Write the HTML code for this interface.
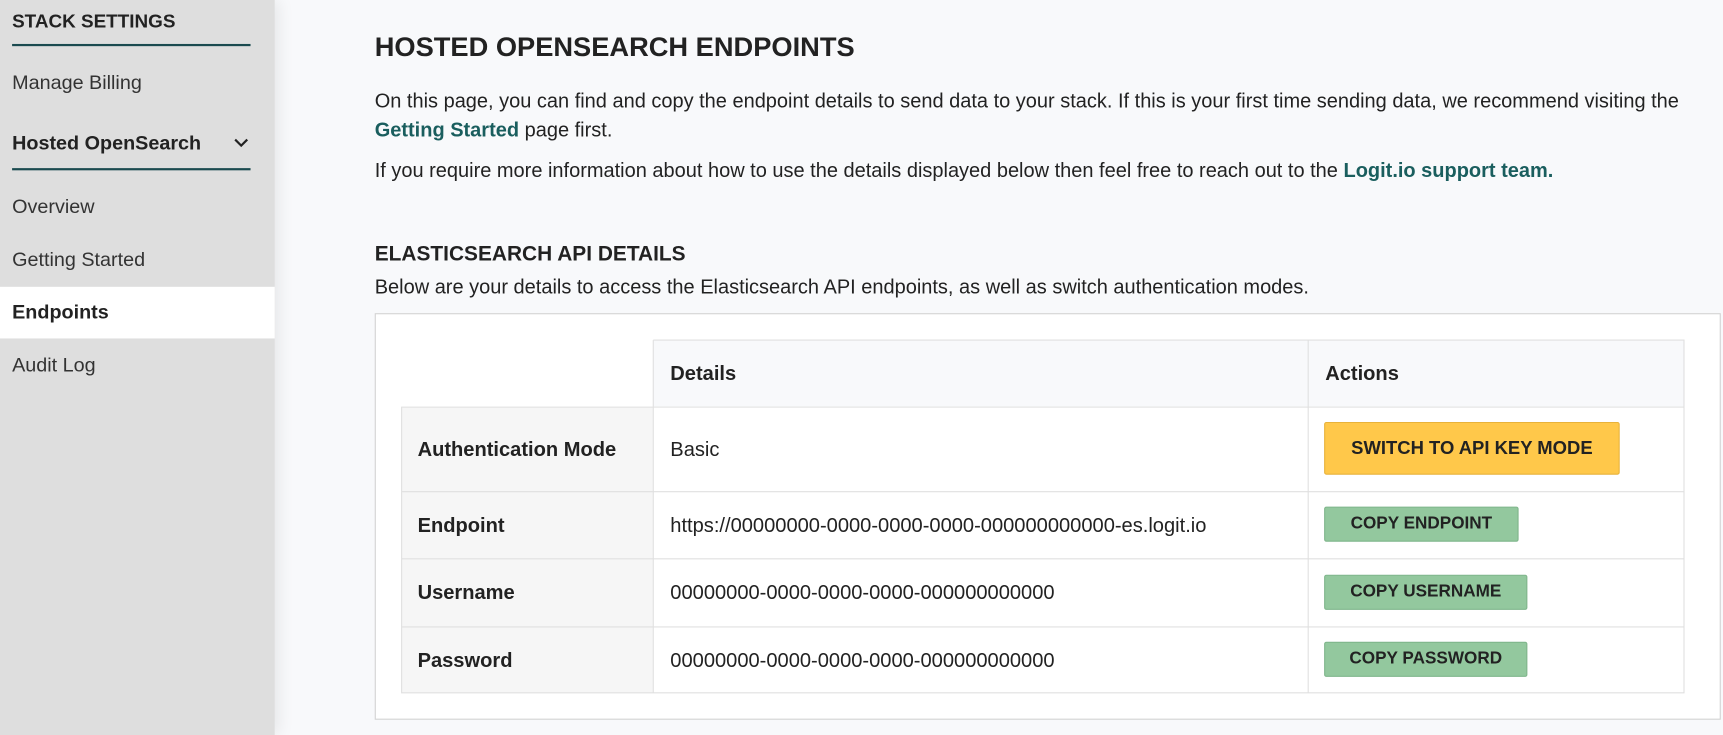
<!DOCTYPE html>
<html><head><style>
*{box-sizing:border-box;margin:0;padding:0}
html,body{width:1723px;height:735px;overflow:hidden;background:#f8f9fb}
#w{position:absolute;left:0;top:0;width:1568px;height:669px;transform:scale(1.09885);transform-origin:0 0;font-family:"Liberation Sans",sans-serif;color:#222}
.side{position:absolute;left:0;top:0;width:250px;height:669px;background:#dedede;box-shadow:4px 0 14px rgba(0,0,0,.08)}
.side div{position:absolute;left:11px;font-size:18px;color:#333;line-height:20px}
.line{position:absolute;left:11px;width:217px;height:2px;background:#1a4a4f}
.a{position:absolute;color:#222}
p{font-size:18.2px;line-height:26px}
a{color:#1a5e5e;font-weight:bold;text-decoration:none}
.card{position:absolute;left:341px;top:285px;width:1225px;height:370px;background:#fff;border:1px solid #d2d2d2}
.c{position:absolute;font-size:18.3px;display:flex;align-items:center}
.b{position:absolute;left:1205px;font-weight:bold;font-size:15.6px;display:flex;align-items:center;justify-content:center;border-radius:2px;color:#222}
</style></head><body><div id="w">
<div class="side">
<div style="top:9px;font-weight:bold;font-size:17.2px;color:#222">STACK SETTINGS</div>
<div class="line" style="top:40px"></div>
<div style="top:65px">Manage Billing</div>
<div style="top:120px;font-weight:bold;color:#222">Hosted OpenSearch</div>
<svg style="position:absolute;left:212px;top:125px" width="15" height="10" viewBox="0 0 15 10"><path d="M2 2l5.5 5.5L13 2" stroke="#222" stroke-width="2" fill="none"/></svg>
<div class="line" style="top:153px"></div>
<div style="top:178px">Overview</div>
<div style="top:226px">Getting Started</div>
<div style="top:261px;left:0;width:250px;height:47px;background:#fff"></div>
<div style="top:274px;font-weight:bold;color:#222">Endpoints</div>
<div style="top:322px">Audit Log</div>
</div>
<div class="a" style="left:341px;top:30px;font-size:24.8px;font-weight:bold">HOSTED OPENSEARCH ENDPOINTS</div>
<div class="a" style="left:341px;top:79px;width:1200px"><p>On this page, you can find and copy the endpoint details to send data to your stack. If this is your first time sending data, we recommend visiting the <a>Getting Started</a> page first.</p></div>
<div class="a" style="left:341px;top:142px"><p>If you require more information about how to use the details displayed below then feel free to reach out to the <a>Logit.io support team.</a></p></div>
<div class="a" style="left:341px;top:221px;font-size:19px;font-weight:bold">ELASTICSEARCH API DETAILS</div>
<div class="a" style="left:341px;top:248px"><p>Below are your details to access the Elasticsearch API endpoints, as well as switch authentication modes.</p></div>
<div class="card"></div>
<svg style="position:absolute;left:0;top:0" width="1568" height="669">
<rect x="594.5" y="309.5" width="938" height="61" fill="#f8f9fb"/>
<rect x="365.5" y="370.5" width="229" height="260" fill="#f6f6f6"/>
<g stroke="#e0e0e0" fill="none">
<path d="M594.5 309.5H1532.5V630.5H365.5V370.5H1532.5M594.5 309.5V630.5M1190.5 309.5V630.5M365.5 447.5H1532.5M365.5 508.5H1532.5M365.5 570.5H1532.5"/>
</g>
</svg>
<div class="c" style="left:610px;top:309px;height:61px;font-weight:bold">Details</div>
<div class="c" style="left:1206px;top:309px;height:61px;font-weight:bold">Actions</div>
<div class="c" style="left:380px;top:370px;height:77px;font-weight:bold">Authentication Mode</div>
<div class="c" style="left:610px;top:370px;height:77px">Basic</div>
<div class="c" style="left:380px;top:447px;height:61px;font-weight:bold">Endpoint</div>
<div class="c" style="left:610px;top:447px;height:61px">https://00000000-0000-0000-0000-000000000000-es.logit.io</div>
<div class="c" style="left:380px;top:508px;height:62px;font-weight:bold">Username</div>
<div class="c" style="left:610px;top:508px;height:62px">00000000-0000-0000-0000-000000000000</div>
<div class="c" style="left:380px;top:570px;height:61px;font-weight:bold">Password</div>
<div class="c" style="left:610px;top:570px;height:61px">00000000-0000-0000-0000-000000000000</div>
<div class="b" style="top:384px;width:269px;height:48px;background:#ffc84a;border:1px solid #e8b23a;font-size:16.8px">SWITCH TO API KEY MODE</div>
<div class="b" style="top:461px;width:177px;height:32px;background:#93c89e;border:1px solid #7fb58b">COPY ENDPOINT</div>
<div class="b" style="top:523px;width:185px;height:32px;background:#93c89e;border:1px solid #7fb58b">COPY USERNAME</div>
<div class="b" style="top:584px;width:185px;height:32px;background:#93c89e;border:1px solid #7fb58b">COPY PASSWORD</div>
</div></body></html>
